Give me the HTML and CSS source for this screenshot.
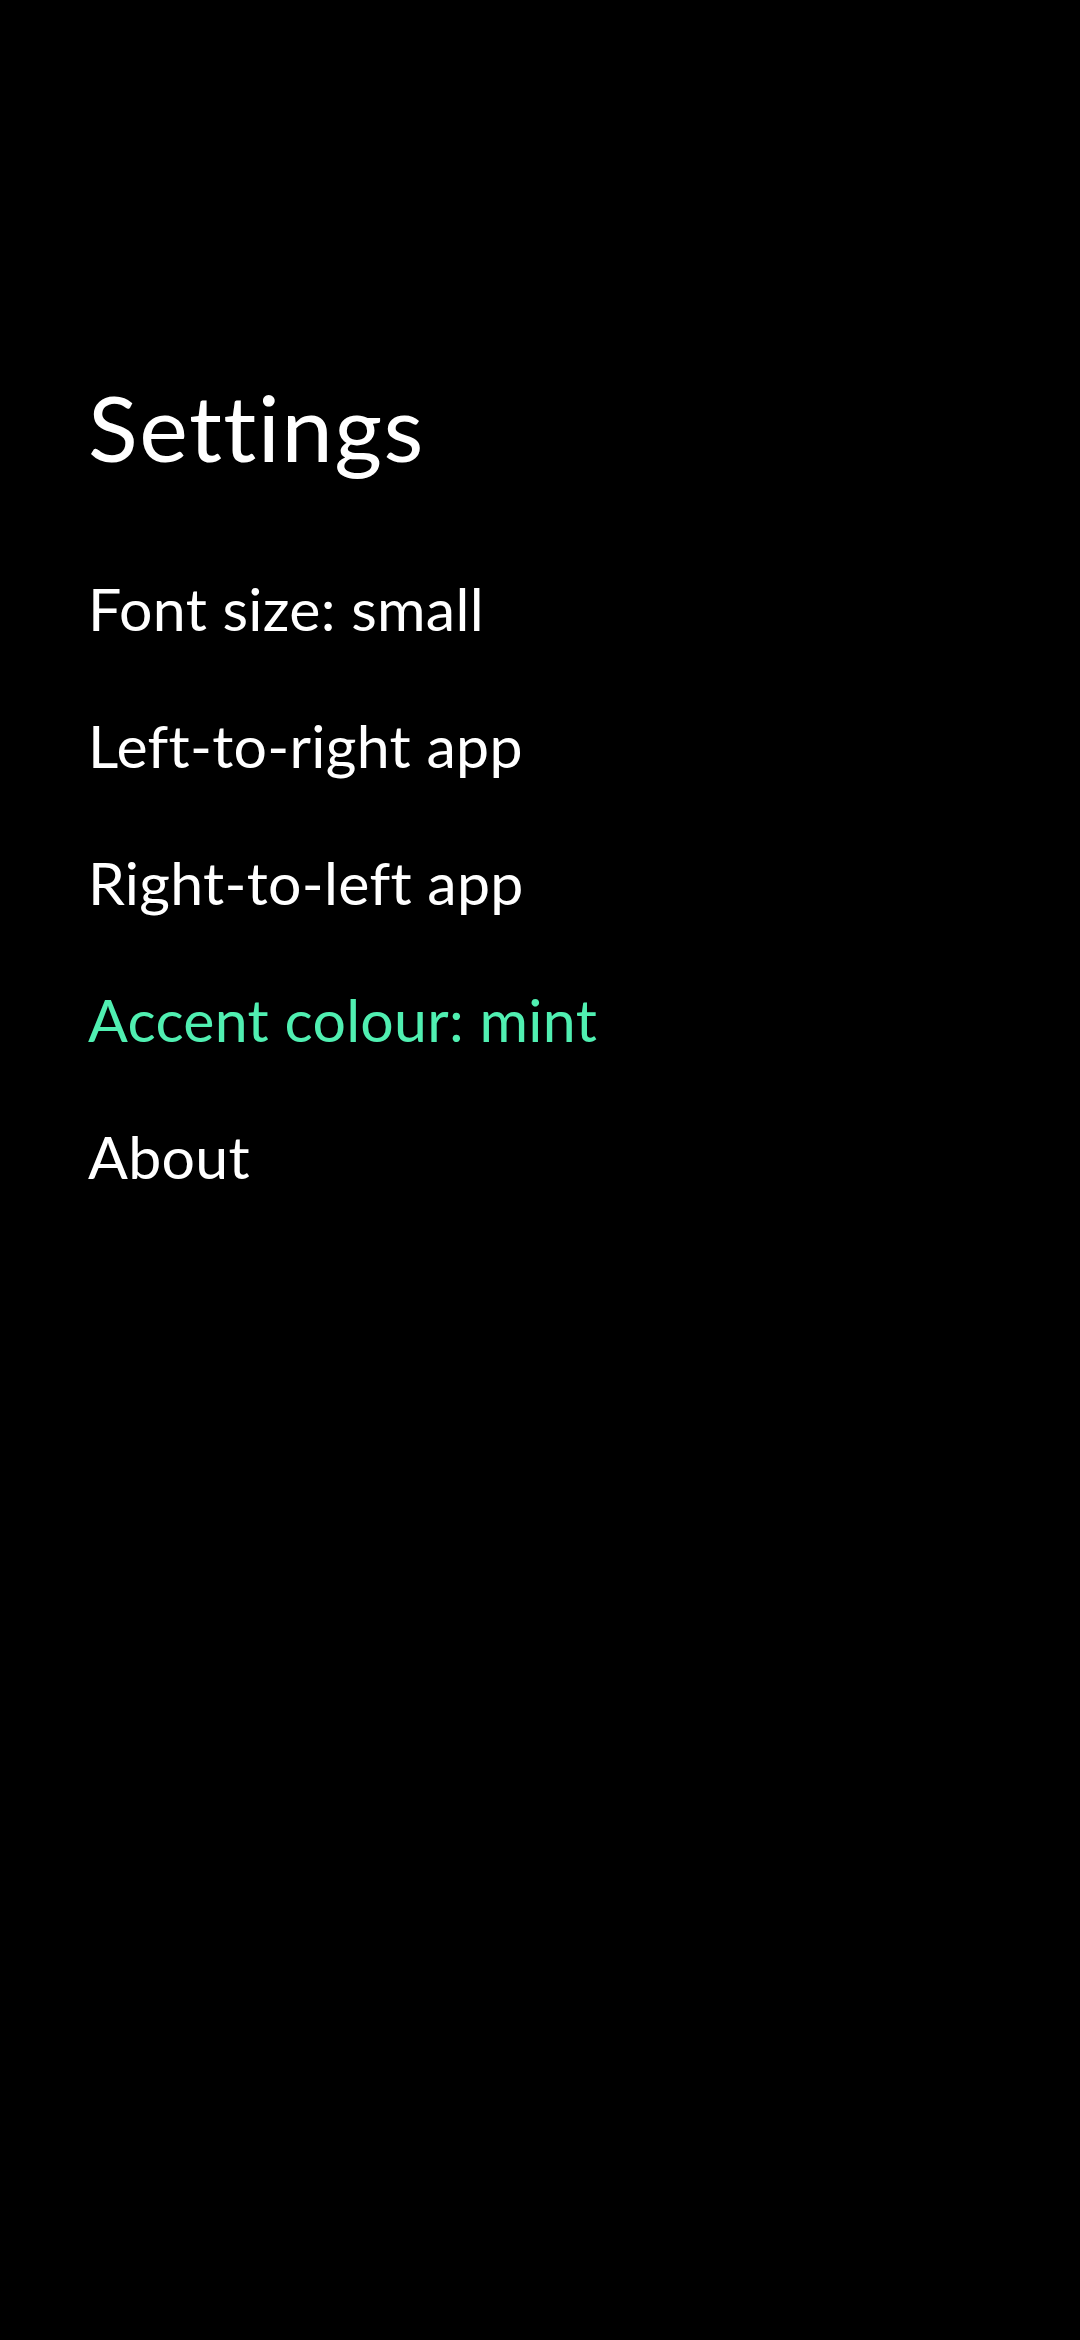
FILE: index.html
```html
<!DOCTYPE html>
<html lang="en">
<head>
<meta charset="utf-8">
<title>Settings</title>
<link rel="stylesheet" href="styles.css">
</head>
<body>
<main class="screen">
  <h1 class="title">Settings</h1>
  <ul class="menu">
    <li class="item">Font size: small</li>
    <li class="item">Left-to-right app</li>
    <li class="item">Right-to-left app</li>
    <li class="item item-accent">Accent colour: mint</li>
    <li class="item">About</li>
  </ul>
</main>
</body>
</html>
```
FILE: styles.css
```css
html, body {
  margin: 0;
  padding: 0;
  background: #000;
}
body {
  width: 1080px;
  height: 2340px;
  overflow: hidden;
  font-family: Lato, "Noto Sans", sans-serif;
  color: #fff;
}
.screen {
  display: flex;
  flex-direction: column;
  padding: 372px 0 0 88px;
}
.title {
  margin: 0;
  font-size: 92px;
  font-weight: 400;
  line-height: 110px;
  letter-spacing: 1.5px;
}
.menu {
  list-style: none;
  margin: 58px 0 0;
  padding: 0;
  display: flex;
  flex-direction: column;
}
.item {
  font-size: 59px;
  line-height: 137px;
  letter-spacing: 0.3px;
}
.item-accent {
  color: #50efb1;
}
```
